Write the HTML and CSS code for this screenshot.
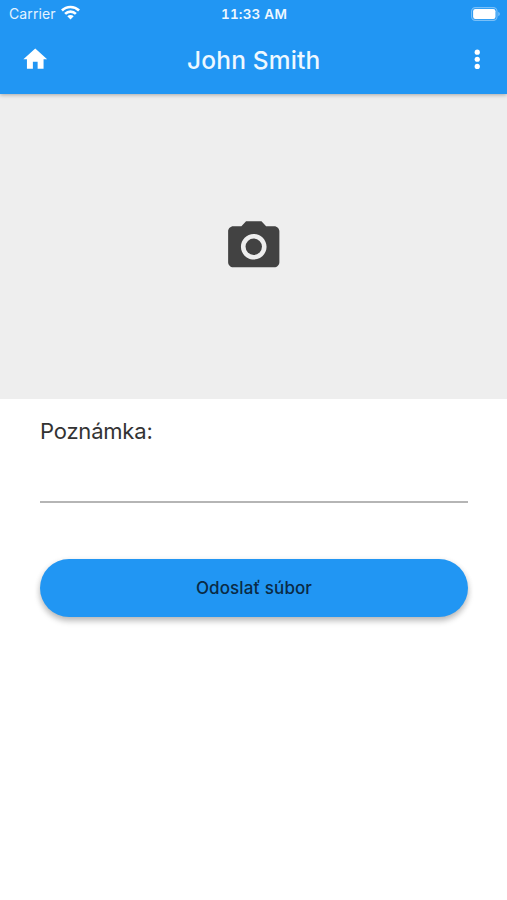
FILE: index.html
```html
<!DOCTYPE html>
<html lang="sk">
<head>
<meta charset="utf-8">
<title>John Smith</title>
<link rel="stylesheet" href="styles.css">
</head>
<body>
<header class="header">
  <div class="status">
    <div class="carrier">
      <span class="carrier-name">Carrier</span>
      <svg class="wifi" viewBox="0 0 18 14" fill="none" stroke="#fff" stroke-width="2.5">
        <path d="M.9 5.1a11.6 11.6 0 0 1 16.2 0M3.9 8.3a7.3 7.3 0 0 1 10.2 0"/>
        <path d="M6 10.6a4.2 4.2 0 0 1 6 0L9 13.7z" fill="#fff" stroke="none"/>
      </svg>
    </div>
    <span class="time">11:33 AM</span>
    <svg class="battery" viewBox="0 0 30 14">
      <rect x=".6" y=".6" width="25.4" height="12.8" rx="3.8" fill="none" stroke="#fff" stroke-opacity=".4" stroke-width="1.1"/>
      <rect x="2.1" y="2.1" width="22.4" height="9.8" rx="2.2" fill="#fff"/>
      <path d="M27.3 4.8c2 .8 2 3.6 0 4.4z" fill="#fff" fill-opacity=".45"/>
    </svg>
  </div>
  <div class="toolbar">
    <svg class="icon" viewBox="0 0 24 24" fill="#fff"><path d="M10 20v-6h4v6h5v-8h3L12 3 2 12h3v8z"/></svg>
    <h1 class="title">John Smith</h1>
    <svg class="icon more" viewBox="0 0 24 24" fill="#fff"><circle cx="12" cy="6" r="2.2"/><circle cx="12" cy="12" r="2.2"/><circle cx="12" cy="18" r="2.2"/></svg>
  </div>
</header>
<main>
  <div class="photo">
    <svg class="camera" viewBox="0 0 24 24" fill="#424242"><circle cx="12" cy="12" r="3.2"/><path d="M9 2L7.17 4H4c-1.1 0-2 .9-2 2v12c0 1.1.9 2 2 2h16c1.1 0 2-.9 2-2V6c0-1.1-.9-2-2-2h-3.17L15 2H9zm3 15c-2.76 0-5-2.24-5-5s2.24-5 5-5 5 2.24 5 5-2.24 5-5 5z"/></svg>
  </div>
  <div class="form">
    <label class="label" for="note">Poznámka:</label>
    <input class="note" id="note" type="text">
    <button class="send" type="button">Odoslať súbor</button>
  </div>
</main>
</body>
</html>
```
FILE: styles.css
```css
* { box-sizing: border-box; }
body {
  margin: 0;
  min-height: 900px;
  background: #fff;
  font-family: Inter, "Liberation Sans", sans-serif;
}
.header {
  position: relative;
  height: 94px;
  background: #2196f3;
  color: #fff;
  box-shadow: 0 1px 4px rgba(0, 0, 0, .3);
}
.status {
  display: grid;
  grid-template-columns: 1fr auto 1fr;
  align-items: center;
  height: 27px;
  padding: 0 6px 0 9px;
}
.carrier { display: flex; align-items: center; gap: 6px; }
.carrier-name { font-size: 14px; letter-spacing: .1px; color: #e4f3ff; }
.wifi { width: 19px; height: 15px; margin: -2px 0 0 -1px; }
.time {
  margin-right: 2px;
  font-size: 13.5px;
  font-weight: 600;
  font-variant-numeric: tabular-nums;
  letter-spacing: .2px;
  color: #eef8ff;
}
.battery { width: 30px; height: 14px; justify-self: end; }
.toolbar {
  display: grid;
  grid-template-columns: 1fr auto 1fr;
  align-items: center;
  height: 66px;
  padding: 0 15.5px 0 21px;
}
.icon { width: 28.5px; height: 28.5px; margin-top: -1px; }
.more { justify-self: end; }
.title {
  margin: 0 5px 0 0;
  font-size: 24.5px;
  font-weight: 500;
  line-height: 30px;
  letter-spacing: .15px;
  color: #eef8ff;
}
.photo {
  display: flex;
  align-items: center;
  justify-content: center;
  height: 305px;
  background: #eee;
}
.camera { width: 61.5px; height: 61.5px; }
.form { display: flex; flex-direction: column; padding: 17px 39px 0 40px; }
.label { font-size: 22px; line-height: 31px; letter-spacing: -.2px; color: #333; }
.note {
  height: 56px;
  padding: 0;
  border: 0;
  border-bottom: 2px solid #b5b5b5;
  background: none;
  font: inherit;
}
.send {
  height: 58px;
  margin-top: 56px;
  padding: 0;
  border: 0;
  border-radius: 29px;
  background: #2196f3;
  box-shadow: 0 4px 6px rgba(0, 0, 0, .22), 0 2px 6px rgba(0, 0, 0, .1);
  color: #0a2a45;
  font: 500 17px/24px Inter, "Liberation Sans", sans-serif;
  letter-spacing: .08px;
}
```
